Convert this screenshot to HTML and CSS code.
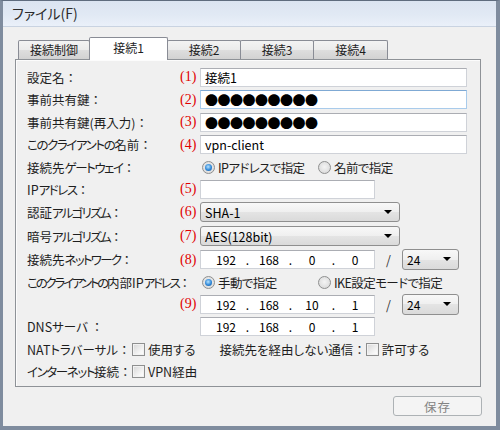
FILE: index.html
```html
<!DOCTYPE html>
<html lang="ja">
<head>
<meta charset="utf-8">
<link rel="stylesheet" href="styles.css">
</head>
<body>
<div class="window">
  <div class="menubar">ファイル(F)</div>
  <div class="content">
    <div class="tabs">
      <div class="tab w71">接続制御</div>
      <div class="tab active">接続1</div>
      <div class="tab w73">接続2</div>
      <div class="tab w73">接続3</div>
      <div class="tab w74">接続4</div>
    </div>
    <div class="panel">
      <div class="form">
        <div class="label">設定名<span class="c">：</span></div><div class="num">(1)</div>
        <div class="field"><div class="input wide">接続1</div></div>

        <div class="label">事前共有鍵<span class="c">：</span></div><div class="num">(2)</div>
        <div class="field"><div class="input wide focus"><span class="dots">●●●●●●●●●</span></div></div>

        <div class="label">事前共有鍵(再入力)<span class="c">：</span></div><div class="num">(3)</div>
        <div class="field"><div class="input wide"><span class="dots">●●●●●●●●●</span></div></div>

        <div class="label"><span class="k">このクライアントの</span>名前<span class="c">：</span></div><div class="num">(4)</div>
        <div class="field"><div class="input wide">vpn-client</div></div>

        <div class="label">接続先<span class="k">ゲートウェイ</span><span class="c">：</span></div><div class="num"></div>
        <div class="field">
          <div class="opt first"><span class="radio on"></span><span class="opt-text">IPアドレスで指定</span></div>
          <div class="opt"><span class="radio"></span><span class="opt-text">名前で指定</span></div>
        </div>

        <div class="label">IP<span class="k">アドレス</span><span class="c">：</span></div><div class="num">(5)</div>
        <div class="field"><div class="input ipw"></div></div>

        <div class="label">認証<span class="k k2">アルゴリズム</span><span class="c">：</span></div><div class="num">(6)</div>
        <div class="field"><div class="select">SHA-1</div></div>

        <div class="label">暗号<span class="k k2">アルゴリズム</span><span class="c">：</span></div><div class="num">(7)</div>
        <div class="field"><div class="select">AES(128bit)</div></div>

        <div class="label">接続先<span class="k k2">ネットワーク</span><span class="c">：</span></div><div class="num">(8)</div>
        <div class="field">
          <div class="input ipw ip"><span class="seg">192</span><span class="dot">.</span><span class="seg">168</span><span class="dot">.</span><span class="seg">0</span><span class="dot">.</span><span class="seg">0</span></div>
          <span class="slash">/</span>
          <div class="select small">24</div>
        </div>

        <div class="label"><span class="k k3">このクライアントの</span>内部IP<span class="k k3">アドレス</span><span class="c">：</span></div><div class="num"></div>
        <div class="field">
          <div class="opt first"><span class="radio on"></span><span class="opt-text">手動で指定</span></div>
          <div class="opt"><span class="radio"></span><span class="opt-text">IKE設定モードで指定</span></div>
        </div>

        <div class="label"></div><div class="num">(9)</div>
        <div class="field">
          <div class="input ipw ip"><span class="seg">192</span><span class="dot">.</span><span class="seg">168</span><span class="dot">.</span><span class="seg">10</span><span class="dot">.</span><span class="seg">1</span></div>
          <span class="slash">/</span>
          <div class="select small">24</div>
        </div>

        <div class="label">DNSサーバ <span class="c">：</span></div><div class="num"></div>
        <div class="field">
          <div class="input ipw ip"><span class="seg">192</span><span class="dot">.</span><span class="seg">168</span><span class="dot">.</span><span class="seg">0</span><span class="dot">.</span><span class="seg">1</span></div>
        </div>

        <div class="full">
          <span class="chk-label">NATトラバーサル<span class="c">：</span></span><span class="check"></span><span class="chk-text">使用する</span>
          <span class="sub-label">接続先を経由しない通信<span class="c">：</span></span><span class="check"></span><span class="chk-text">許可する</span>
        </div>

        <div class="full">
          <span class="chk-label"><span class="k">インターネット</span>接続<span class="c">：</span></span><span class="check"></span><span class="chk-text">VPN経由</span>
        </div>
      </div>
    </div>
    <div class="actions"><div class="btn">保存</div></div>
  </div>
</div>
</body>
</html>
```
FILE: styles.css
```css
html, body {
  margin: 0;
  padding: 0;
}
body {
  width: 500px;
  height: 430px;
  overflow: hidden;
  font-family: "Noto Sans CJK JP", "Noto Sans", sans-serif;
  font-size: 12.5px;
  color: #1e1e1e;
  font-feature-settings: "palt";
  background: #f0f0f0;
}
.c {
  font-feature-settings: normal;
}
.k { letter-spacing: -1.4px; }
.k.k2 { letter-spacing: -1.7px; }
.k.k3 { letter-spacing: -2.2px; }
.window {
  box-sizing: border-box;
  height: 430px;
  background: #f0f0f0;
  border-top: 1px solid #5f6c7e;
  border-left: 3px solid #7f8c9e;
  border-right: 4px solid #7f8c9e;
  border-bottom: 4px solid #7f8c9e;
  display: flex;
  flex-direction: column;
}
.menubar {
  height: 25px;
  line-height: 25px;
  padding-left: 9px;
  font-size: 14px;
  color: #2b2b2b;
  background: linear-gradient(#dbe4f1, #e1e9f4 55%, #eaf0f9);
  border-bottom: 1px solid #c9d3e1;
}
.content {
  padding: 10px 15px 0 12px;
}
.tabs {
  display: flex;
  align-items: flex-end;
  height: 22px;
  padding-left: 3px;
  position: relative;
  z-index: 2;
}
.tab {
  box-sizing: border-box;
  height: 19px;
  border: 1px solid #898c95;
  border-bottom: none;
  border-radius: 2px 2px 0 0;
  background: linear-gradient(#f3f3f3, #ebebeb 50%, #dedede 50%, #d2d2d2);
  text-align: center;
  line-height: 17px;
  margin-right: -1px;
  color: #1e1e1e;
  font-size: 12px;
}
.w71 { width: 72px; }
.w73 { width: 74px; }
.w74 { width: 75px; }
.tab.active {
  width: 79px;
  height: 23px;
  margin-bottom: -1px;
  background: #fff;
  line-height: 20px;
  position: relative;
  z-index: 3;
}
.panel {
  box-sizing: border-box;
  width: 466px;
  height: 328px;
  border: 1px solid #8e9297;
  box-shadow: inset 1px 1px 0 #fcfcfc;
  background: #f0f0f0;
  padding: 6px 0 0 11px;
  position: relative;
  z-index: 1;
}
.form {
  display: grid;
  grid-template-columns: 153px 20px 267px;
  grid-template-rows: 22px 23px 22px 23px 22px 22px 24px 24px 23px 22px 22px 23px 23px 21px;
  align-items: center;
}
.label {
  white-space: nowrap;
  color: #1e1e1e;
}
.num {
  font-family: "Liberation Serif", serif;
  font-size: 14px;
  color: #e00000;
  font-feature-settings: normal;
}
.field {
  display: flex;
  align-items: center;
}
.input {
  box-sizing: border-box;
  height: 19px;
  background: #fff;
  border: 1px solid #cfd2d8;
  border-top-color: #abadb3;
  padding-left: 4px;
  display: flex;
  align-items: center;
  color: #000;
  font-feature-settings: normal;
}
.input.wide { width: 267px; }
.input.focus {
  border-color: #a9cbeb;
  border-top-color: #7fa9d4;
}
.input.ipw { width: 175px; }
.input.ip {
  padding-left: 7px;
  font-size: 12px;
}
.seg {
  width: 36px;
  text-align: center;
}
.dot {
  width: 7px;
  text-align: center;
}
.dots {
  font-size: 13px;
  letter-spacing: -0.5px;
  line-height: 1;
}
.slash {
  width: 27px;
  text-align: center;
  color: #333;
}
.select {
  box-sizing: border-box;
  width: 200px;
  height: 20px;
  border: 1px solid #8f8f8f;
  border-radius: 3px;
  background: linear-gradient(#f8f8f8, #efefef 50%, #e4e4e4 50%, #dadada);
  padding-left: 4px;
  display: flex;
  align-items: center;
  position: relative;
  color: #000;
  font-feature-settings: normal;
}
.select::after {
  content: "";
  position: absolute;
  right: 7px;
  top: 7px;
  border-left: 4px solid transparent;
  border-right: 4px solid transparent;
  border-top: 4px solid #000;
}
.select.small {
  width: 57px;
  height: 21px;
  font-size: 12px;
}
.opt {
  display: flex;
  align-items: center;
}
.opt.first {
  width: 116px;
  margin-left: 2px;
}
.opt-text {
  margin-left: 3px;
  letter-spacing: -0.6px;
  white-space: nowrap;
}
.radio {
  box-sizing: border-box;
  width: 13px;
  height: 13px;
  border-radius: 50%;
  border: 1px solid #8e8f8f;
  background: radial-gradient(circle at 50% 45%, #f4f4f4, #d4d4d4);
  position: relative;
  flex: none;
}
.radio.on::after {
  content: "";
  position: absolute;
  left: 2px;
  top: 2px;
  width: 7px;
  height: 7px;
  border-radius: 50%;
  background: radial-gradient(circle at 45% 40%, #b6e3ff, #3088d8 55%, #0f4a8e);
}
.full {
  grid-column: 1 / -1;
  display: flex;
  align-items: center;
  white-space: nowrap;
}
.chk-label {
  min-width: 105px;
  flex: none;
}
.check {
  box-sizing: border-box;
  width: 13px;
  height: 13px;
  border: 1px solid #8e8f8f;
  background: linear-gradient(135deg, #d6d6d6, #f6f6f6 70%, #fff);
  box-shadow: inset 0 0 0 1px #f2f2f2;
  flex: none;
}
.chk-text {
  margin-left: 3px;
}
.sub-label {
  margin-left: 24px;
  min-width: 145px;
  flex: none;
}
.actions {
  display: flex;
  justify-content: flex-end;
  margin-top: 9px;
  margin-right: -1px;
}
.btn {
  box-sizing: border-box;
  width: 89px;
  height: 20px;
  border: 1px solid #adb2b5;
  border-radius: 3px;
  background: #f4f4f4;
  color: #838383;
  display: flex;
  align-items: center;
  justify-content: center;
  letter-spacing: 1px;
}
```
